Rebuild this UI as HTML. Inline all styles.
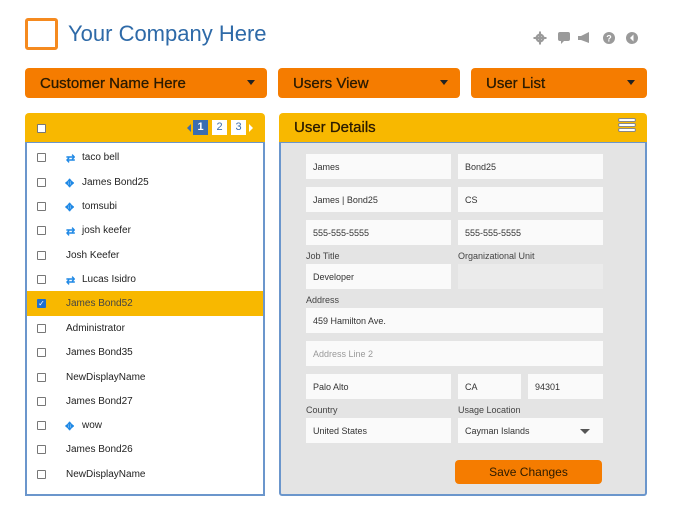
<!DOCTYPE html>
<html><head><style>
*{box-sizing:border-box;margin:0;padding:0}
body{width:680px;height:527px;background:#fff;font-family:"Liberation Sans",sans-serif;position:relative;overflow:hidden}
.a{position:absolute}
.logo{left:25px;top:18px;width:33px;height:32px;border:3px solid #f58a1f;border-radius:3px}
.title{left:68px;top:21px;font-size:22px;color:#2e6aa8}
.dd{top:68px;height:30px;background:#f57c00;border-radius:4px;font-size:15px;color:#2a1a00;padding:7px 15px;-webkit-text-stroke:0.3px #2a1a00}
.dd:after{content:"";position:absolute;right:12px;top:12px;border-left:4px solid transparent;border-right:4px solid transparent;border-top:5px solid #222}
.hdr{top:113px;height:29px;background:#f8b800;border-radius:4px 4px 0 0}
.cb{width:9px;height:9px;border:1px solid #777;background:#fff;border-radius:1px}
.row{left:27px;width:236px;height:24px;font-size:10px;color:#222}
.row .cb{position:absolute;left:10px;top:8px}
.row span{position:absolute;top:7px}
.f{height:25px;background:#fafafa;font-size:9px;color:#333;padding:8px 7px}
.lbl{font-size:9px;color:#444}
.ic{color:#1e88e5;font-size:11px;font-weight:bold}
</style></head><body>
<div class="a logo"></div>
<div class="a title">Your Company Here</div>
<svg class="a" style="left:532px;top:30px" width="110" height="16" viewBox="0 0 110 16">
<g fill="#9a9a9a">
<circle cx="8" cy="8" r="4.5"/><circle cx="8" cy="8" r="2" fill="#fff"/>
<rect x="7" y="1.5" width="2" height="13"/><rect x="1.5" y="7" width="13" height="2"/>
<rect x="26" y="2" width="12" height="9" rx="2"/><polygon points="29,10 33,10 29,14"/>
<polygon points="49,6 57,2 57,13 49,10"/><rect x="46" y="6" width="3" height="4"/>
<circle cx="77" cy="8" r="6"/><circle cx="100" cy="8" r="6"/></g>
<text x="77" y="11.5" font-size="9" font-weight="bold" fill="#fff" text-anchor="middle" font-family="Liberation Sans">?</text>
<polygon points="101.5,4.5 98,8 101.5,11.5" fill="#fff"/>
</svg>
<div class="a dd" style="left:25px;width:242px">Customer Name Here</div>
<div class="a dd" style="left:278px;width:182px">Users View</div>
<div class="a dd" style="left:471px;width:176px">User List</div>

<div class="a hdr" style="left:25px;width:240px"></div>
<div class="a cb" style="left:37px;top:124px"></div>
<div class="a" style="left:187px;top:124px;border-right:4px solid #3b6db0;border-top:4px solid transparent;border-bottom:4px solid transparent"></div>
<div class="a" style="left:193px;top:120px;width:15px;height:15px;background:#3b6db0;color:#fff;font-size:11px;text-align:center;line-height:15px;font-weight:bold">1</div>
<div class="a" style="left:212px;top:120px;width:15px;height:15px;background:#fff;color:#3b6db0;font-size:11px;text-align:center;line-height:15px">2</div>
<div class="a" style="left:231px;top:120px;width:15px;height:15px;background:#fff;color:#3b6db0;font-size:11px;text-align:center;line-height:15px">3</div>
<div class="a" style="left:249px;top:124px;border-left:4px solid #fff;border-top:4px solid transparent;border-bottom:4px solid transparent"></div>
<div class="a" style="left:25px;top:142px;width:240px;height:354px;border:2px solid #6b96cc;border-top:1px solid #6b96cc"></div>

<div class="a row" style="top:145px"><div class="cb"></div><span class="ic" style="left:39px">⇄</span><span style="left:55px">taco bell</span></div>
<div class="a row" style="top:170px"><div class="cb"></div><span class="ic" style="left:38px">✥</span><span style="left:55px">James Bond25</span></div>
<div class="a row" style="top:194px"><div class="cb"></div><span class="ic" style="left:38px">✥</span><span style="left:55px">tomsubi</span></div>
<div class="a row" style="top:218px"><div class="cb"></div><span class="ic" style="left:39px">⇄</span><span style="left:55px">josh keefer</span></div>
<div class="a row" style="top:243px"><div class="cb"></div><span style="left:39px">Josh Keefer</span></div>
<div class="a row" style="top:267px"><div class="cb"></div><span class="ic" style="left:39px">⇄</span><span style="left:55px">Lucas Isidro</span></div>
<div class="a row" style="top:291px;background:#f8b800;height:25px"><div class="cb" style="background:#1e6fd0;border-color:#1e6fd0;color:#fff;font-size:8px;line-height:7px;text-align:center">✓</div><span style="left:39px;color:#444">James Bond52</span></div>
<div class="a row" style="top:316px"><div class="cb"></div><span style="left:39px">Administrator</span></div>
<div class="a row" style="top:340px"><div class="cb"></div><span style="left:39px">James Bond35</span></div>
<div class="a row" style="top:365px"><div class="cb"></div><span style="left:39px">NewDisplayName</span></div>
<div class="a row" style="top:389px"><div class="cb"></div><span style="left:39px">James Bond27</span></div>
<div class="a row" style="top:413px"><div class="cb"></div><span class="ic" style="left:38px">✥</span><span style="left:55px">wow</span></div>
<div class="a row" style="top:437px"><div class="cb"></div><span style="left:39px">James Bond26</span></div>
<div class="a row" style="top:462px"><div class="cb"></div><span style="left:39px">NewDisplayName</span></div>

<div class="a hdr" style="left:279px;width:368px;font-size:15px;color:#2a1a00;padding:6px 15px;-webkit-text-stroke:0.3px #2a1a00">User Details</div>
<div class="a" style="left:618px;top:118px;width:18px;height:4px;border:1px solid #888;background:#fff;border-radius:2px"></div>
<div class="a" style="left:618px;top:123px;width:18px;height:4px;border:1px solid #888;background:#fff;border-radius:2px"></div>
<div class="a" style="left:618px;top:128px;width:18px;height:4px;border:1px solid #888;background:#fff;border-radius:2px"></div>
<div class="a" style="left:279px;top:142px;width:368px;height:354px;background:#e4e4e4;border:2px solid #6b96cc;border-top:1px solid #6b96cc;border-radius:0 0 3px 3px"></div>

<div class="a f" style="left:306px;top:154px;width:145px">James</div>
<div class="a f" style="left:458px;top:154px;width:145px">Bond25</div>
<div class="a f" style="left:306px;top:187px;width:145px">James | Bond25</div>
<div class="a f" style="left:458px;top:187px;width:145px">CS</div>
<div class="a f" style="left:306px;top:220px;width:145px">555-555-5555</div>
<div class="a f" style="left:458px;top:220px;width:145px">555-555-5555</div>
<div class="a lbl" style="left:306px;top:251px">Job Title</div>
<div class="a lbl" style="left:458px;top:251px">Organizational Unit</div>
<div class="a f" style="left:306px;top:264px;width:145px">Developer</div>
<div class="a f" style="left:458px;top:264px;width:145px;background:#ebebeb"></div>
<div class="a lbl" style="left:306px;top:295px">Address</div>
<div class="a f" style="left:306px;top:308px;width:297px">459 Hamilton Ave.</div>
<div class="a f" style="left:306px;top:341px;width:297px;color:#999">Address Line 2</div>
<div class="a f" style="left:306px;top:374px;width:145px">Palo Alto</div>
<div class="a f" style="left:458px;top:374px;width:63px">CA</div>
<div class="a f" style="left:528px;top:374px;width:75px">94301</div>
<div class="a lbl" style="left:306px;top:405px">Country</div>
<div class="a lbl" style="left:458px;top:405px">Usage Location</div>
<div class="a f" style="left:306px;top:418px;width:145px">United States</div>
<div class="a f" style="left:458px;top:418px;width:145px">Cayman Islands</div>
<div class="a" style="left:580px;top:429px;border-left:5px solid transparent;border-right:5px solid transparent;border-top:5px solid #555"></div>
<div class="a" style="left:455px;top:460px;width:147px;height:24px;background:#f57c00;border-radius:4px;font-size:12px;color:#2a1a00;text-align:center;line-height:24px">Save Changes</div>
</body></html>
